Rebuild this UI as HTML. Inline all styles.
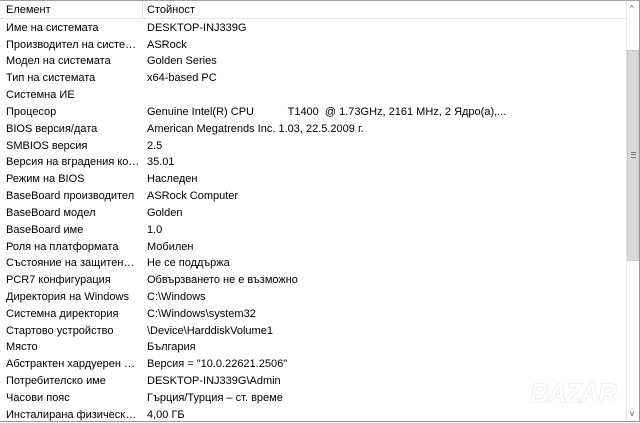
<!DOCTYPE html><html><head><meta charset="utf-8"><style>
body{margin:0;width:640px;height:422px;overflow:hidden;background:#fff;font-family:"Liberation Sans",sans-serif;font-size:11px;color:#000;position:relative}
.top{position:absolute;left:0;top:0;width:640px;height:1px;background:#a0a0a0}
.hdr{position:absolute;left:0;top:1px;width:626px;height:17px;border-bottom:1px solid #e5e5e5}
.hdr div{position:absolute;top:3px}
.sep{position:absolute;left:142px;top:1px;width:1px;height:17px;background:#e5e5e5}
.r{position:absolute;left:0;height:17px;width:626px;white-space:nowrap}
.r span{position:absolute;top:3px}
.a{left:6px;width:134px;overflow:hidden;text-overflow:ellipsis}
.b{left:147px}
.sb{position:absolute;left:626px;top:1px;width:13px;height:421px;background:#fff;border-left:1px solid #e8e8e8}
.th{position:absolute;left:627px;top:50px;width:12px;height:211px;background:#dadada;border:1px solid #c8c8c8;box-sizing:border-box}
.bar{position:absolute;right:0;top:0;width:1px;height:422px;background:#999}
.bot{position:absolute;left:0;bottom:0;width:640px;height:1px;background:#999}
.wm{position:absolute;left:530px;top:378px;font:bold 26px "Liberation Sans",sans-serif;color:#fff;text-shadow:0 0 1px #ccc,0 0 1px #ccc;letter-spacing:-1px;font-style:italic}
</style></head><body>
<div class="top"></div>
<div class="hdr"><div style="left:6px">Елемент</div><div style="left:147px">Стойност</div></div>
<div class="sep"></div>
<div class="r" style="top:19px"><span class="a">Име на системата</span><span class="b">DESKTOP-INJ339G</span></div>
<div class="r" style="top:36px"><span class="a">Производител на системата</span><span class="b">ASRock</span></div>
<div class="r" style="top:52px"><span class="a">Модел на системата</span><span class="b">Golden Series</span></div>
<div class="r" style="top:69px"><span class="a">Тип на системата</span><span class="b">x64-based PC</span></div>
<div class="r" style="top:86px"><span class="a">Системна ИЕ</span><span class="b"></span></div>
<div class="r" style="top:103px"><span class="a">Процесор</span><span class="b">Genuine Intel(R) CPU&nbsp;&nbsp;&nbsp;&nbsp;&nbsp;&nbsp;&nbsp;&nbsp;&nbsp;&nbsp;&nbsp;T1400&nbsp; @ 1.73GHz, 2161 MHz, 2 Ядро(а),...</span></div>
<div class="r" style="top:120px"><span class="a">BIOS версия/дата</span><span class="b">American Megatrends Inc. 1.03, 22.5.2009 г.</span></div>
<div class="r" style="top:137px"><span class="a">SMBIOS версия</span><span class="b">2.5</span></div>
<div class="r" style="top:153px"><span class="a">Версия на вградения контролер</span><span class="b">35.01</span></div>
<div class="r" style="top:170px"><span class="a">Режим на BIOS</span><span class="b">Наследен</span></div>
<div class="r" style="top:187px"><span class="a">BaseBoard производител</span><span class="b">ASRock Computer</span></div>
<div class="r" style="top:204px"><span class="a">BaseBoard модел</span><span class="b">Golden</span></div>
<div class="r" style="top:221px"><span class="a">BaseBoard име</span><span class="b">1.0</span></div>
<div class="r" style="top:238px"><span class="a">Роля на платформата</span><span class="b">Мобилен</span></div>
<div class="r" style="top:254px"><span class="a">Състояние на защитено стартиране</span><span class="b">Не се поддържа</span></div>
<div class="r" style="top:271px"><span class="a">PCR7 конфигурация</span><span class="b">Обвързването не е възможно</span></div>
<div class="r" style="top:288px"><span class="a">Директория на Windows</span><span class="b">C:\Windows</span></div>
<div class="r" style="top:305px"><span class="a">Системна директория</span><span class="b">C:\Windows\system32</span></div>
<div class="r" style="top:322px"><span class="a">Стартово устройство</span><span class="b">\Device\HarddiskVolume1</span></div>
<div class="r" style="top:338px"><span class="a">Място</span><span class="b">България</span></div>
<div class="r" style="top:355px"><span class="a">Абстрактен хардуерен слой</span><span class="b">Версия = "10.0.22621.2506"</span></div>
<div class="r" style="top:372px"><span class="a">Потребителско име</span><span class="b">DESKTOP-INJ339G\Admin</span></div>
<div class="r" style="top:389px"><span class="a">Часови пояс</span><span class="b">Гърция/Турция – ст. време</span></div>
<div class="r" style="top:406px"><span class="a">Инсталирана физическа памет</span><span class="b">4,00 ГБ</span></div>
<div class="wm">BAZÂR</div>
<div class="sb"><div style="position:absolute;top:3px;left:3px;font-size:8px;color:#555">^</div><div style="position:absolute;bottom:4px;left:3px;font-size:8px;color:#555">v</div></div>
<div class="th"><div style="position:absolute;left:3px;top:101px;width:5px;height:6px;border-top:1px solid #777;border-bottom:1px solid #777;box-sizing:border-box"></div><div style="position:absolute;left:3px;top:103px;width:5px;height:1px;background:#777"></div></div>
<div class="bar"></div><div class="bot"></div>
</body></html>
